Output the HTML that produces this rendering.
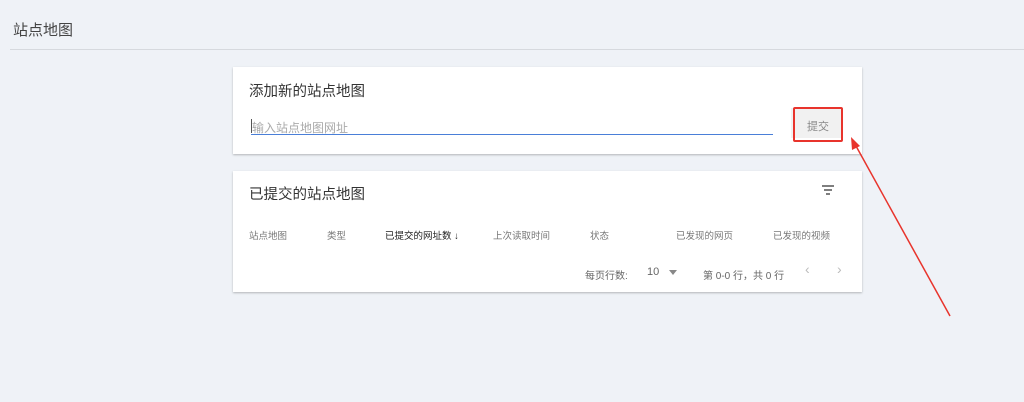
<!DOCTYPE html>
<html><head><meta charset="utf-8"><style>
body{margin:0;width:1024px;height:402px;background:#eff2f7;font-family:"Liberation Sans","Noto Sans CJK SC",sans-serif;position:relative;overflow:hidden;color:#333}
.a{position:absolute}
.card{position:absolute;left:233px;width:629px;background:#fff;box-shadow:0 1px 2px rgba(0,0,0,.25)}
.th{position:absolute;top:57px;font-size:9.5px;color:#777}
</style></head><body>
<div class="a" style="left:13px;top:19px;font-size:15px;color:#444">站点地图</div>
<div class="a" style="left:10px;top:49px;width:1014px;height:1px;background:#d6d9de"></div>
<div class="card" style="top:67px;height:87px">
 <div class="a" style="left:16px;top:13px;font-size:14.5px;color:#333">添加新的站点地图</div>
 <div class="a" style="left:19px;top:52px;font-size:12px;color:#aaa">输入站点地图网址</div>
 <div class="a" style="left:18px;top:52px;width:1px;height:14px;background:#555"></div>
 <div class="a" style="left:18px;top:67px;width:522px;height:1px;background:#4a7fd8"></div>
 <div class="a" style="left:558px;top:41px;width:52px;height:30px;background:#f1f1f1"></div>
 <div class="a" style="left:560px;top:40px;width:50px;height:35px;border:2px solid #e8342c;border-radius:2px;box-sizing:border-box"></div>
 <div class="a" style="left:574px;top:51px;font-size:11px;color:#888">提交</div>
</div>
<div class="card" style="top:171px;height:121px">
 <div class="a" style="left:16px;top:12px;font-size:14.5px;color:#333">已提交的站点地图</div>
 <svg class="a" style="left:588px;top:13px" width="14" height="12"><path d="M1 2h12M3 6h8M5 10h4" stroke="#555" stroke-width="1.6"/></svg>
 <div class="th" style="left:16px">站点地图</div>
 <div class="th" style="left:94px">类型</div>
 <div class="th" style="left:152px;color:#222">已提交的网址数 ↓</div>
 <div class="th" style="left:260px">上次读取时间</div>
 <div class="th" style="left:357px">状态</div>
 <div class="th" style="left:443px">已发现的网页</div>
 <div class="th" style="left:540px">已发现的视频</div>
 <div class="a" style="left:352px;top:96px;font-size:10px;color:#666">每页行数:</div>
 <div class="a" style="left:414px;top:95px;font-size:11px;color:#666">10</div>
 <div class="a" style="left:436px;top:99px;width:0;height:0;border:4px solid transparent;border-top:5px solid #888"></div>
 <div class="a" style="left:470px;top:96px;font-size:10px;color:#666">第 0-0 行，共 0 行</div>
 <div class="a" style="left:572px;top:90px;font-size:14px;color:#bbb">‹</div>
 <div class="a" style="left:604px;top:90px;font-size:14px;color:#bbb">›</div>
</div>
<svg class="a" style="left:0;top:0" width="1024" height="402"><line x1="950" y1="316" x2="856" y2="146" stroke="#e8342c" stroke-width="1.5"/><path d="M851 137 L852 150 L860 146Z" fill="#e8342c"/></svg>
</body></html>
